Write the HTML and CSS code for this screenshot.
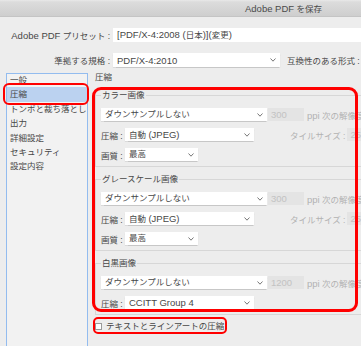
FILE: index.html
```html
<!DOCTYPE html>
<html lang="ja">
<head>
<meta charset="utf-8">
<link rel="stylesheet" href="styles.css">
</head>
<body>
<div class="window">
  <div class="titlebar"><span class="title"><span class="en">Adobe PDF</span> を保存</span></div>
  <div class="top">
    <div class="row r1">
      <span class="lbl"><span class="en">Adobe PDF</span> プリセット :</span>
      <div class="field wide"><span class="en">[PDF/X-4:2008 (</span>日本<span class="en">)](</span>変更<span class="en">)</span></div>
    </div>
    <div class="row r2">
      <span class="lbl">準拠する規格 :</span>
      <div class="select std"><span class="en">PDF/X-4:2010</span><svg class="chev" width="6" height="4" viewBox="0 0 6 4"><polyline points="0.5,0.5 3,3.2 5.5,0.5" fill="none" stroke="#777" stroke-width="1"/></svg></div>
      <span class="compat">互換性のある形式 :</span>
    </div>
  </div>
  <div class="main">
    <ul class="list">
      <li>一般</li>
      <li class="sel">圧縮</li>
      <li>トンボと裁ち落とし</li>
      <li>出力</li>
      <li>詳細設定</li>
      <li>セキュリティ</li>
      <li>設定内容</li>
    </ul>
    <div class="panel">
      <div class="phead">圧縮</div>
      <fieldset class="group">
        <legend>カラー画像</legend>
        <div class="rows">
          <div class="frow">
            <div class="select s-down"><span>ダウンサンプルしない</span><svg class="chev" width="6" height="4" viewBox="0 0 6 4"><polyline points="0.5,0.5 3,3.2 5.5,0.5" fill="none" stroke="#777" stroke-width="1"/></svg></div>
            <div class="num en">300</div>
            <span class="dim ppi"><span class="en">ppi</span> 次の解像度を超える場合</span>
          </div>
          <div class="frow">
            <span class="flbl">圧縮 :</span>
            <div class="select s-comp"><span>自動 <span class="en">(JPEG)</span></span><svg class="chev" width="6" height="4" viewBox="0 0 6 4"><polyline points="0.5,0.5 3,3.2 5.5,0.5" fill="none" stroke="#777" stroke-width="1"/></svg></div>
            <span class="dim tile">タイルサイズ :</span>
            <div class="num tilenum en">256</div>
          </div>
          <div class="frow">
            <span class="flbl">画質 :</span>
            <div class="select s-qual"><span>最高</span><svg class="chev" width="6" height="4" viewBox="0 0 6 4"><polyline points="0.5,0.5 3,3.2 5.5,0.5" fill="none" stroke="#777" stroke-width="1"/></svg></div>
          </div>
        </div>
      </fieldset>
      <fieldset class="group">
        <legend>グレースケール画像</legend>
        <div class="rows">
          <div class="frow">
            <div class="select s-down"><span>ダウンサンプルしない</span><svg class="chev" width="6" height="4" viewBox="0 0 6 4"><polyline points="0.5,0.5 3,3.2 5.5,0.5" fill="none" stroke="#777" stroke-width="1"/></svg></div>
            <div class="num en">300</div>
            <span class="dim ppi"><span class="en">ppi</span> 次の解像度を超える場合</span>
          </div>
          <div class="frow">
            <span class="flbl">圧縮 :</span>
            <div class="select s-comp"><span>自動 <span class="en">(JPEG)</span></span><svg class="chev" width="6" height="4" viewBox="0 0 6 4"><polyline points="0.5,0.5 3,3.2 5.5,0.5" fill="none" stroke="#777" stroke-width="1"/></svg></div>
            <span class="dim tile">タイルサイズ :</span>
            <div class="num tilenum en">256</div>
          </div>
          <div class="frow">
            <span class="flbl">画質 :</span>
            <div class="select s-qual"><span>最高</span><svg class="chev" width="6" height="4" viewBox="0 0 6 4"><polyline points="0.5,0.5 3,3.2 5.5,0.5" fill="none" stroke="#777" stroke-width="1"/></svg></div>
          </div>
        </div>
      </fieldset>
      <fieldset class="group">
        <legend>白黒画像</legend>
        <div class="rows">
          <div class="frow">
            <div class="select s-down"><span>ダウンサンプルしない</span><svg class="chev" width="6" height="4" viewBox="0 0 6 4"><polyline points="0.5,0.5 3,3.2 5.5,0.5" fill="none" stroke="#777" stroke-width="1"/></svg></div>
            <div class="num en">1200</div>
            <span class="dim ppi"><span class="en">ppi</span> 次の解像度を超える場合</span>
          </div>
          <div class="frow">
            <span class="flbl">圧縮 :</span>
            <div class="select s-comp"><span class="en">CCITT Group 4</span><svg class="chev" width="6" height="4" viewBox="0 0 6 4"><polyline points="0.5,0.5 3,3.2 5.5,0.5" fill="none" stroke="#777" stroke-width="1"/></svg></div>
          </div>
        </div>
      </fieldset>
      <div class="check"><span class="box"></span><span>テキストとラインアートの圧縮</span></div>
    </div>
  </div>
  <div class="mark m1"></div>
  <div class="mark m2"></div>
  <div class="mark m3"></div>
</div>
</body>
</html>
```

FILE: styles.css
```css
html, body {
  margin: 0;
  padding: 0;
  background: #ededed;
}

.window {
  position: relative;
  width: 361px;
  height: 346px;
  overflow: hidden;
  display: flex;
  flex-direction: column;
  background: #ededed;
  font-family: "Liberation Sans", "Noto Sans CJK JP", sans-serif;
  font-size: 8.5px;
  color: #474747;
}

.en {
  font-size: 9.5px;
}

.titlebar {
  height: 16px;
  flex: 0 0 16px;
  display: flex;
  align-items: center;
  padding-left: 245px;
  background: linear-gradient(#e9e9e9 0, #dcdcdc 2px, #cecece 100%);
  border-bottom: 1px solid #c4c4c4;
}

.title {
  color: #4a4a4a;
  white-space: nowrap;
}

.top {
  display: flex;
  flex-direction: column;
  row-gap: 11px;
  padding-top: 11px;
}

.row {
  display: flex;
  align-items: center;
  height: 14px;
  white-space: nowrap;
}

.lbl {
  flex: 0 0 110px;
  text-align: right;
}

.field {
  margin-left: 3px;
  height: 14px;
  line-height: 14px;
  background: #fff;
  padding-left: 4px;
}

.wide {
  flex: 0 0 260px;
}

.select {
  display: flex;
  align-items: center;
  justify-content: space-between;
  box-sizing: border-box;
  height: 13px;
  line-height: 13px;
  background: #fff;
  padding: 0 4px;
  box-shadow: 0 0.5px 1px rgba(0, 0, 0, 0.16);
  white-space: nowrap;
  flex: 0 0 auto;
}

.std {
  margin-left: 3px;
  width: 167px;
  height: 14px;
}

.chev {
  flex: 0 0 auto;
}

.compat {
  margin-left: 7px;
}

.main {
  flex: 1;
  display: flex;
  margin-top: 6px;
  min-height: 0;
}

.list {
  list-style: none;
  margin: 0 0 0 6px;
  padding: 0;
  box-sizing: border-box;
  flex: 0 0 82px;
  width: 82px;
  border: 1px solid #93bcef;
  border-bottom: none;
  background: #f2f2f2;
  overflow: hidden;
}

.list li {
  height: 14.4px;
  line-height: 14.4px;
  padding-left: 3px;
  white-space: nowrap;
  overflow: hidden;
}

.list li:first-child {
  margin-top: -1px;
}

.list li.sel {
  background: #bbd2f0;
}

.panel {
  margin-left: 7px;
  flex: 0 0 300px;
  width: 300px;
}

.phead {
  line-height: 9px;
  height: 9px;
}

.group {
  margin: 7px 0 0 0;
  padding: 7px 0 5px 5px;
  border: 1px solid #d7d7d7;
  min-inline-size: 0;
}

.phead + .group {
  margin-top: 8px;
}

.group legend {
  padding: 0 1px;
  line-height: 11px;
  height: 11px;
}

.rows {
  display: grid;
  row-gap: 7px;
}

.frow {
  display: flex;
  align-items: center;
  height: 13px;
  white-space: nowrap;
}

.flbl {
  flex: 0 0 24px;
}

.s-down {
  width: 166px;
}

.s-comp {
  width: 129px;
}

.s-qual {
  width: 73px;
}

.num {
  box-sizing: border-box;
  height: 13px;
  line-height: 13px;
  width: 36px;
  margin-left: 1px;
  padding-left: 3px;
  background: #e4e4e4;
  color: #c2c2c2;
  flex: 0 0 auto;
}

.dim {
  color: #b2b2b2;
}

.ppi {
  margin-left: 3px;
}

.tile {
  margin-left: 36px;
  flex: 0 0 54px;
  text-align: right;
}

.tilenum {
  margin-left: 2px;
  width: 30px;
}

.check {
  display: flex;
  align-items: center;
  margin-top: 5px;
  height: 12px;
  line-height: 12px;
  white-space: nowrap;
}

.box {
  box-sizing: border-box;
  width: 7px;
  height: 7px;
  border: 1px solid #9a9a9a;
  background: #fff;
  margin-right: 4px;
  flex: 0 0 auto;
}

.mark {
  position: absolute;
  box-sizing: border-box;
  border: 2.5px solid #ff0000;
}

.m1 {
  left: 3px;
  top: 83px;
  width: 86px;
  height: 22px;
  border-radius: 6px;
}

.m2 {
  left: 92px;
  top: 87px;
  width: 266px;
  height: 225px;
  border-radius: 9px;
  border-width: 3px;
}

.m3 {
  left: 93px;
  top: 317px;
  width: 134px;
  height: 17px;
  border-radius: 5px;
}
```
